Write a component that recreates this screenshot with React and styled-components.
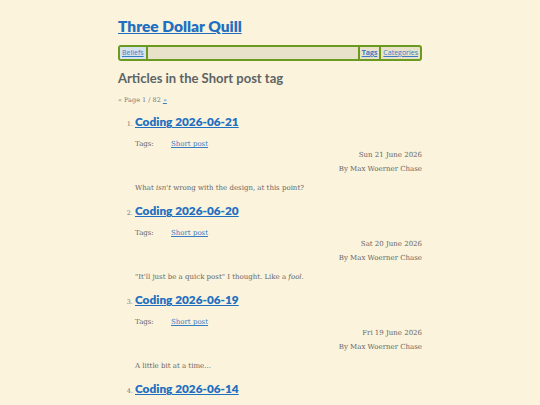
import React from "react";
import styled, { createGlobalStyle } from "styled-components";

const GlobalStyle = createGlobalStyle`
  html, body {
    margin: 0;
    padding: 0;
    background: #fbf3dc;
  }
`;

const Page = styled.div`
  width: 304px;
  margin: 0 auto;
  padding-top: 14px;
  font-family: "DejaVu Serif", serif;
  color: #5a5a5a;
`;

const SiteTitle = styled.h1`
  margin: 0;
  font-family: Lato, sans-serif;
  font-size: 15.5px;
  font-weight: 800;
  line-height: 24px;
  a {
    color: #1f70c1;
  }
`;

const Nav = styled.nav`
  margin-top: 7px;
  display: flex;
  align-items: stretch;
  height: 12px;
  border: 2px solid #6a9a1f;
  border-radius: 3px;
  background: #e9e2cb;
  font-family: "Open Sans", sans-serif;
  font-size: 7px;
  line-height: 12px;
`;

const NavItem = styled.a`
  padding: 0 2px;
  color: #3a7cc4;
  font-weight: ${(p) => (p.$bold ? 700 : 400)};
  background: ${(p) => (p.$active ? "#d6e3ec" : "transparent")};
`;

const NavSep = styled.span`
  width: 2px;
  background: #6a9a1f;
`;

const NavGap = styled.span`
  flex: 1;
`;

const Heading = styled.h2`
  margin: 8px 0 0;
  font-family: Lato, sans-serif;
  font-size: 13px;
  font-weight: 700;
  color: #5d6466;
  line-height: 18px;
`;

const Pager = styled.div`
  margin-top: 9px;
  font-size: 6.5px;
  color: #777;
  a {
    color: #3a7cc4;
  }
`;

const List = styled.ol`
  margin: 9px 0 0;
  padding-left: 17px;
`;

const Entry = styled.li`
  font-family: "DejaVu Serif", serif;
  font-size: 6.5px;
  color: #777;
  margin-bottom: 10px;
`;

const EntryTitle = styled.a`
  font-family: Lato, sans-serif;
  font-size: 11.8px;
  font-weight: 800;
  color: #1f70c1;
  line-height: 18px;
`;

const TagRow = styled.div`
  margin-top: 9px;
  display: flex;
  font-size: 7px;
  color: #666;
  a {
    color: #3a7cc4;
  }
`;

const TagLabel = styled.span`
  width: 36px;
`;

const Meta = styled.div`
  margin-top: 0;
  text-align: right;
  font-size: 7px;
  line-height: 14px;
  color: #666;
`;

const Excerpt = styled.p`
  margin: 8px 0 0;
  font-size: 7px;
  color: #666;
`;

const posts = [
  {
    title: "Coding 2026-06-21",
    date: "Sun 21 June 2026",
    excerpt: (
      <>
        What <i>isn't</i> wrong with the design, at this point?
      </>
    ),
  },
  {
    title: "Coding 2026-06-20",
    date: "Sat 20 June 2026",
    excerpt: (
      <>
        "It'll just be a quick post" I thought. Like a <i>fool.</i>
      </>
    ),
  },
  {
    title: "Coding 2026-06-19",
    date: "Fri 19 June 2026",
    excerpt: <>A little bit at a time...</>,
  },
  {
    title: "Coding 2026-06-14",
    date: "Sun 14 June 2026",
    excerpt: <>Another day.</>,
  },
];

const App = () => {
  return (
    <>
      <GlobalStyle />
      <Page>
        <SiteTitle>
          <a href="#">Three Dollar Quill</a>
        </SiteTitle>
        <Nav>
          <NavItem href="#" $active>
            Beliefs
          </NavItem>
          <NavSep />
          <NavGap />
          <NavSep />
          <NavItem href="#" $bold>
            Tags
          </NavItem>
          <NavSep />
          <NavItem href="#">Categories</NavItem>
        </Nav>
        <Heading>Articles in the Short post tag</Heading>
        <Pager>
          « Page 1 / 82 <a href="#">»</a>
        </Pager>
        <List>
          {posts.map((post) => (
            <Entry key={post.title}>
              <EntryTitle href="#">{post.title}</EntryTitle>
              <TagRow>
                <TagLabel>Tags:</TagLabel>
                <a href="#">Short post</a>
              </TagRow>
              <Meta>
                {post.date}
                <br />
                By Max Woerner Chase
              </Meta>
              <Excerpt>{post.excerpt}</Excerpt>
            </Entry>
          ))}
        </List>
      </Page>
    </>
  );
};

export default App;
